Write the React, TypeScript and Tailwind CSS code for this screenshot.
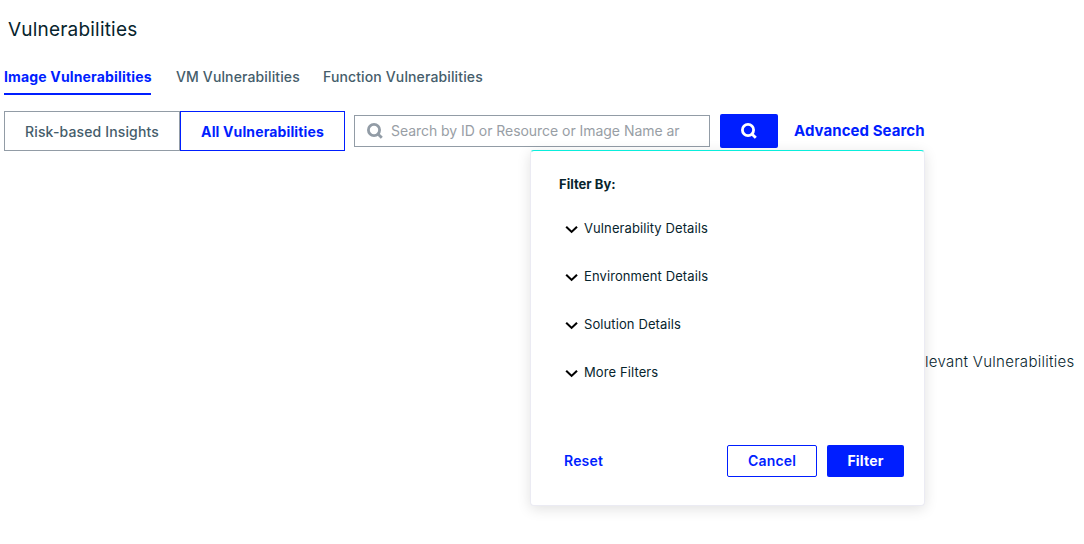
import React from "react";

function SearchIcon({ className }: { className: string }) {
  return (
    <svg viewBox="0 0 16 16" className={className} fill="none" stroke="currentColor">
      <circle cx="7" cy="7" r="5.6" strokeWidth="2.8" />
      <path d="M10.4 10.4 L14.8 14.8" strokeWidth="2.8" />
    </svg>
  );
}

function Chevron() {
  return (
    <svg viewBox="0 0 14 14" className="mt-[2px] h-[14px] w-[14px] shrink-0" fill="none" stroke="#000" strokeWidth="2.1">
      <path d="M1.2 3.7 L6.6 8.9 L12 3.7" />
    </svg>
  );
}

const sections = ["Vulnerability Details", "Environment Details", "Solution Details", "More Filters"];

function FilterPanel() {
  return (
    <section className="absolute left-[530px] top-[150px] z-10 flex h-[356px] w-[395px] flex-col rounded border border-[#ebebf3] border-t-[#0aeedc] bg-white shadow-[0_3px_14px_rgba(0,0,0,0.12)]">
      <h2 className="ml-7 mt-[23px] text-[13px] font-bold leading-5 tracking-[0.02px] text-[#07242d]">Filter By:</h2>
      <ul className="ml-[34px] mt-[11px]">
        {sections.map((name) => (
          <li key={name} className="flex h-12 items-center gap-[5px] text-[13px] tracking-[0.1px] text-[#07242d]">
            <Chevron />
            <span>{name}</span>
          </li>
        ))}
      </ul>
      <div className="mb-7 ml-[33px] mr-5 mt-auto flex h-8 items-center text-sm font-semibold tracking-[0.18px]">
        <button className="text-[#001eff]">Reset</button>
        <button className="ml-auto h-8 w-[90px] rounded-[2px] border border-[#001eff] text-[#001eff]">Cancel</button>
        <button className="ml-[10px] h-8 w-[77px] rounded-[2px] bg-[#001eff] font-bold text-white">Filter</button>
      </div>
    </section>
  );
}

export default function App() {
  return (
    <main className="relative flex h-[544px] w-[1084px] flex-col overflow-hidden whitespace-nowrap bg-white font-['Inter',sans-serif]">
      <h1 className="ml-2 mt-4 text-[19px] leading-7 tracking-[0.2px] text-[#07242d]">Vulnerabilities</h1>
      <nav className="ml-1 mt-[23px] flex h-7 text-sm font-medium leading-5 tracking-[0.13px] text-[#455d6b]">
        <a className="w-[147px] border-b-2 border-[#001eff] font-bold tracking-[0.16px] text-[#001eff]">Image Vulnerabilities</a>
        <a className="ml-[25px] w-[123px]">VM Vulnerabilities</a>
        <a className="ml-6">Function Vulnerabilities</a>
      </nav>
      <div className="ml-1 mt-4 flex h-10 items-center">
        <button className="h-10 w-[176px] border border-[#929ca6] pt-[2px] text-sm font-medium tracking-[0.14px] text-[#455d6b]">Risk-based Insights</button>
        <button className="h-10 w-[165px] border border-[#001eff] pt-[2px] text-sm font-bold tracking-[0.13px] text-[#001eff]">All Vulnerabilities</button>
        <div className="ml-[9px] flex h-8 w-[356px] items-center border border-[#929ca6] pl-3">
          <SearchIcon className="h-4 w-4 text-[#929ca6]" />
          <span className="ml-2 text-sm tracking-[-0.04px] text-[#989ea5]">Search by ID or Resource or Image Name ar</span>
        </div>
        <button className="ml-[10px] flex h-[34px] w-[58px] items-center justify-center rounded-[2px] bg-[#001eff] text-white">
          <SearchIcon className="h-4 w-4" />
        </button>
        <a className="ml-4 text-[15px] font-bold leading-5 tracking-[0.06px] text-[#001eff]">Advanced Search</a>
      </div>
      <p className="ml-[925px] mt-[200px] text-[15px] font-light leading-[22px] tracking-[0.28px] text-[#07242d]">levant Vulnerabilities</p>
      <FilterPanel />
    </main>
  );
}
